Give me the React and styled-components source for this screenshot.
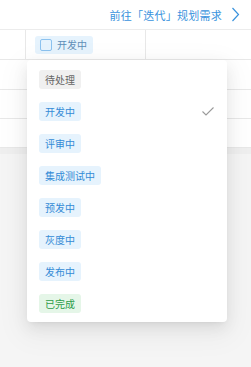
import React from "react";
import styled, { createGlobalStyle } from "styled-components";

const statuses = [
  { label: "待处理", tone: "gray" },
  { label: "开发中", tone: "blue", selected: true },
  { label: "评审中", tone: "blue" },
  { label: "集成测试中", tone: "blue" },
  { label: "预发中", tone: "blue" },
  { label: "灰度中", tone: "blue" },
  { label: "发布中", tone: "blue" },
  { label: "已完成", tone: "green" },
];

const tones = {
  gray: { bg: "#f0f0f0", fg: "#666666" },
  blue: { bg: "#e6f3fd", fg: "#348bd6" },
  green: { bg: "#e5f6e8", fg: "#2d9d48" },
};

function App() {
  return (
    <Page>
      <GlobalStyle />
      <Header>
        <PlanLink>
          前往「迭代」规划需求
          <svg width="9" height="15" viewBox="0 0 9 15">
            <polyline points="1.5,1 7.5,7.5 1.5,14" fill="none" stroke="#3a93dd" strokeWidth="1.2" />
          </svg>
        </PlanLink>
      </Header>
      <Table>
        <Row $h={29}>
          <Cell $w={26} />
          <Cell $w={120}>
            <StatusChip>
              <Box />
              开发中
            </StatusChip>
          </Cell>
          <Cell />
        </Row>
        <Row $h={29} />
        <Row $h={28} />
        <Row $h={28} />
        <ScrollBand />
      </Table>
      <Menu>
        {statuses.map((s) => (
          <MenuItem key={s.label}>
            <Tag $tone={s.tone}>{s.label}</Tag>
            {s.selected && (
              <svg width="12" height="9" viewBox="0 0 12 9">
                <polyline points="0.5,4.5 4,8 11.5,0.5" fill="none" stroke="#9a9a9a" strokeWidth="1.1" />
              </svg>
            )}
          </MenuItem>
        ))}
      </Menu>
    </Page>
  );
}

export default App;

const GlobalStyle = createGlobalStyle`
body {
  margin: 0;
  background: #f5f5f5;
  font-family: "Noto Sans CJK SC", "Noto Sans", sans-serif;
}
`

const Page = styled.div`
position: relative;
min-height: 367px;
background: #f5f5f5;
`

const Header = styled.div`
height: 29px;
background: #ffffff;
border-bottom: 1px solid #ececec;
display: flex;
align-items: center;
justify-content: flex-end;
padding-right: 11px;
`

const PlanLink = styled.div`
display: flex;
align-items: center;
gap: 9px;
font-size: 11px;
letter-spacing: 0.25px;
color: #3a93dd;
`

const Table = styled.div`
background: #ffffff;
`

const Row = styled.div`
height: ${(p) => p.$h}px;
border-bottom: 1px solid #e8e8e8;
display: flex;
`

const Cell = styled.div`
width: ${(p) => (p.$w ? p.$w + "px" : "auto")};
flex: ${(p) => (p.$w ? "none" : "1")};
border-right: ${(p) => (p.$w ? "1px solid #e8e8e8" : "none")};
display: flex;
align-items: center;
padding-left: ${(p) => (p.$w > 100 ? "9px" : "0")};
box-sizing: border-box;
`

const StatusChip = styled.div`
display: flex;
align-items: center;
gap: 5px;
height: 18px;
padding: 0 6px 0 5px;
border-radius: 3px;
background: #e6f3fd;
color: #5f8fb8;
font-size: 10px;
`

const Box = styled.span`
width: 10px;
height: 10px;
border: 1.3px solid #8cc2ef;
border-radius: 2px;
`

const ScrollBand = styled.div`
height: 6px;
background: #efefef;
`

const Menu = styled.div`
position: absolute;
top: 60px;
left: 27px;
width: 200px;
padding: 3px 0;
background: #ffffff;
border-radius: 4px;
box-shadow: 0 6px 16px rgba(0, 0, 0, 0.08), 0 3px 6px -4px rgba(0, 0, 0, 0.12), 0 9px 28px 8px rgba(0, 0, 0, 0.04);
`

const MenuItem = styled.div`
height: 32px;
display: flex;
align-items: center;
justify-content: space-between;
padding: 0 13px 0 12px;
`

const Tag = styled.span`
height: 19px;
line-height: 19px;
padding: 0 6px;
border-radius: 3px;
font-size: 10px;
background: ${(p) => tones[p.$tone].bg};
color: ${(p) => tones[p.$tone].fg};
`
